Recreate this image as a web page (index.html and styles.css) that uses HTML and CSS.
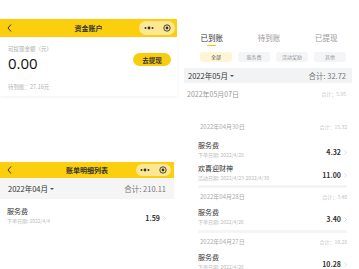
FILE: index.html
```html
<!DOCTYPE html>
<html lang="zh-CN">
<head>
  <meta charset="UTF-8">
  <meta name="viewport" content="width=device-width, initial-scale=1.0">
  <title>资金账户</title>
  <link rel="stylesheet" href="styles.css">
</head>
<body>
  <div class="page">
    <!-- 左侧：资金账户 + 账单明细 -->
    <div class="col-left">
      <section class="account">
        <header class="navbar">
          <span class="nav-back"><svg width="5" height="8" viewBox="0 0 5 8"><polyline points="4,0.5 1,4 4,7.5" fill="none" stroke="#333" stroke-width="1"/></svg></span>
          <div class="nav-title">资金账户</div>
          <span class="capsule">
            <svg width="10" height="4" viewBox="0 0 10 4"><circle cx="1.5" cy="2" r="1" fill="#333"/><circle cx="5" cy="2" r="1.4" fill="#333"/><circle cx="8.5" cy="2" r="1" fill="#333"/></svg>
            <svg width="8" height="8" viewBox="0 0 8 8"><circle cx="4" cy="4" r="3.2" fill="none" stroke="#333" stroke-width="0.9"/><circle cx="4" cy="4" r="1.4" fill="#333"/></svg>
          </span>
        </header>
        <div class="balance-card">
          <p class="balance-label">可提现金额（元）</p>
          <div class="balance-row">
            <span class="balance-amount">0.00</span>
            <button class="withdraw-btn">去提现</button>
          </div>
          <p class="balance-pending">待到账：27.16元</p>
        </div>
      </section>

      <section class="bills">
        <header class="navbar navbar--small">
          <span class="nav-back"><svg width="5" height="8" viewBox="0 0 5 8"><polyline points="4,0.5 1,4 4,7.5" fill="none" stroke="#333" stroke-width="1"/></svg></span>
          <div class="nav-title">账单明细列表</div>
          <span class="capsule">
            <svg width="10" height="4" viewBox="0 0 10 4"><circle cx="1.5" cy="2" r="1" fill="#333"/><circle cx="5" cy="2" r="1.4" fill="#333"/><circle cx="8.5" cy="2" r="1" fill="#333"/></svg>
            <svg width="8" height="8" viewBox="0 0 8 8"><circle cx="4" cy="4" r="3.2" fill="none" stroke="#333" stroke-width="0.9"/><circle cx="4" cy="4" r="1.4" fill="#333"/></svg>
          </span>
        </header>
        <div class="month-bar">
          <span class="month-pick">2022年04月 <i class="caret"></i></span>
          <span class="month-total">合计: 210.11</span>
        </div>
        <div class="bill-row bill-row--plain">
          <div class="bill-info">
            <div class="bill-name">服务费</div>
            <div class="bill-sub">下单日期: 2022/4/4</div>
          </div>
          <div class="bill-amount">1.59 <svg class="chev" width="3" height="5" viewBox="0 0 3 5"><polyline points="0.5,0.5 2.5,2.5 0.5,4.5" fill="none" stroke="#c8c8c8" stroke-width="0.7"/></svg></div>
        </div>
      </section>
    </div>

    <!-- 右侧：到账明细 -->
    <div class="col-right">
      <nav class="tabs">
        <span class="tab tab--active">已到账</span>
        <span class="tab">待到账</span>
        <span class="tab">已提现</span>
      </nav>
      <div class="chips">
        <span class="chip chip--active">全部</span>
        <span class="chip">服务费</span>
        <span class="chip">活动奖励</span>
        <span class="chip">其他</span>
      </div>
      <div class="month-bar month-bar--wide">
        <span class="month-pick">2022年05月 <i class="caret"></i></span>
        <span class="month-total">合计: 32.72</span>
      </div>
      <div class="day-head day-head--top">
        <span>2022年05月07日</span>
        <span class="day-total">合计：5.95</span>
      </div>

      <div class="day-list">
        <div class="day-group day-group--first">
          <div class="day-head">
            <span>2022年04月30日</span>
            <span class="day-total">合计：15.32</span>
          </div>
          <div class="bill-row">
            <div class="bill-info">
              <div class="bill-name">服务费</div>
              <div class="bill-sub">下单日期: 2022/4/28</div>
            </div>
            <div class="bill-amount">4.32 <svg class="chev" width="3" height="5" viewBox="0 0 3 5"><polyline points="0.5,0.5 2.5,2.5 0.5,4.5" fill="none" stroke="#c8c8c8" stroke-width="0.7"/></svg></div>
          </div>
          <div class="bill-row">
            <div class="bill-info">
              <div class="bill-name">欢喜迎财神</div>
              <div class="bill-sub">活动日期: 2022/4/23-2022/4/30</div>
            </div>
            <div class="bill-amount">11.00 <svg class="chev" width="3" height="5" viewBox="0 0 3 5"><polyline points="0.5,0.5 2.5,2.5 0.5,4.5" fill="none" stroke="#c8c8c8" stroke-width="0.7"/></svg></div>
          </div>
        </div>
        <div class="day-group">
          <div class="day-head">
            <span>2022年04月28日</span>
            <span class="day-total">合计：3.40</span>
          </div>
          <div class="bill-row">
            <div class="bill-info">
              <div class="bill-name">服务费</div>
              <div class="bill-sub">下单日期: 2022/4/26</div>
            </div>
            <div class="bill-amount">3.40 <svg class="chev" width="3" height="5" viewBox="0 0 3 5"><polyline points="0.5,0.5 2.5,2.5 0.5,4.5" fill="none" stroke="#c8c8c8" stroke-width="0.7"/></svg></div>
          </div>
        </div>
        <div class="day-group">
          <div class="day-head">
            <span>2022年04月27日</span>
            <span class="day-total">合计：10.28</span>
          </div>
          <div class="bill-row">
            <div class="bill-info">
              <div class="bill-name">服务费</div>
              <div class="bill-sub">下单日期: 2022/4/26</div>
            </div>
            <div class="bill-amount">10.28 <svg class="chev" width="3" height="5" viewBox="0 0 3 5"><polyline points="0.5,0.5 2.5,2.5 0.5,4.5" fill="none" stroke="#c8c8c8" stroke-width="0.7"/></svg></div>
          </div>
        </div>
      </div>
    </div>
  </div>
</body>
</html>
```

FILE: styles.css
```css
/* 页面基础 */
body {
  margin: 0;
  font-family: "Noto Sans CJK SC", "Noto Sans", sans-serif;
  background-color: #ffffff;
  color: #333333;
  overflow: hidden;
}

p {
  margin: 0;
}

.page {
  display: flex;
  gap: 6px;
  align-items: flex-start;
  height: 269px;
  overflow: hidden;
}

/* 左栏 */
.col-left {
  width: 177px;
  flex: none;
}

.account {
  padding-top: 19px;
}

/* 黄色导航栏 */
.navbar {
  display: grid;
  grid-template-columns: 38px 1fr 38px;
  align-items: center;
  height: 18px;
  background-color: #fbcf0e;
}

.navbar--small {
  height: 16px;
}

.nav-back {
  display: flex;
  padding-left: 7px;
}

.nav-title {
  text-align: center;
  font-size: 7px;
  font-weight: bold;
  line-height: 10px;
  color: #333333;
}

.capsule {
  display: flex;
  align-items: center;
  justify-content: space-around;
  width: 36px;
  height: 14px;
  border-radius: 7px;
  background-color: #fde794;
}

.navbar--small .capsule {
  height: 12px;
  width: 35px;
}

/* 余额卡片 */
.balance-card {
  padding: 8px 6px 5px 8px;
  background-color: #ffffff;
  box-shadow: 0 1px 3px rgba(0, 0, 0, 0.06);
}

.balance-label {
  font-size: 5.5px;
  line-height: 8px;
  color: #aaaaaa;
}

.balance-row {
  display: flex;
  justify-content: space-between;
  align-items: flex-start;
}

.balance-amount {
  font-family: "Open Sans", "Noto Sans", sans-serif;
  font-size: 15px;
  line-height: 20px;
  color: #111111;
}

.withdraw-btn {
  width: 38px;
  height: 13px;
  padding: 0;
  border: none;
  border-radius: 7px;
  background-color: #f9cd0f;
  font-family: inherit;
  font-size: 6.5px;
  font-weight: bold;
  color: #333333;
}

.balance-pending {
  margin-top: 10px;
  font-size: 5.5px;
  line-height: 8px;
  color: #b0b0b0;
}

/* 账单明细 */
.bills {
  width: 174px;
  margin-top: 66px;
}

.month-bar {
  display: flex;
  justify-content: space-between;
  align-items: center;
  height: 21px;
  padding: 0 8px;
  background-color: #f5f5f5;
  font-size: 7.5px;
}

.month-pick {
  display: flex;
  align-items: center;
  gap: 2px;
  color: #333333;
}

.caret {
  width: 0;
  height: 0;
  border-left: 2px solid transparent;
  border-right: 2px solid transparent;
  border-top: 2.5px solid #555555;
}

.month-total {
  color: #777777;
}

.bill-row {
  display: flex;
  justify-content: space-between;
  align-items: center;
  padding-top: 6px;
}

.bill-row--plain {
  padding: 8px 8px 8px 7px;
}

.bill-name {
  font-size: 7px;
  line-height: 9px;
  color: #333333;
}

.bill-sub {
  margin-top: 1px;
  font-size: 5px;
  line-height: 7px;
  color: #bbbbbb;
  white-space: nowrap;
}

.bill-amount {
  display: flex;
  align-items: center;
  gap: 3px;
  padding-top: 5px;
  font-size: 7px;
  font-weight: 600;
  color: #333333;
}

/* 右栏 */
.col-right {
  width: 176px;
  flex: none;
}

.tabs {
  display: grid;
  grid-template-columns: repeat(3, 1fr);
  width: 172px;
  padding-top: 32px;
}

.tab {
  position: relative;
  text-align: center;
  font-size: 7.5px;
  line-height: 11px;
  color: #999999;
  padding-bottom: 4px;
}

.tab--active {
  color: #333333;
}

.tab--active::after {
  content: "";
  position: absolute;
  left: 50%;
  bottom: 1px;
  width: 9px;
  height: 1.5px;
  margin-left: -5px;
  border-radius: 1px;
  background-color: #f7c600;
}

.chips {
  display: grid;
  grid-template-columns: repeat(4, 1fr);
  gap: 6px;
  margin: 5px 13px 0 17px;
}

.chip {
  height: 10px;
  border-radius: 3px;
  background-color: #f4f5f7;
  text-align: center;
  font-size: 5px;
  line-height: 10px;
  color: #999999;
}

.chip--active {
  background-color: #fdf5d6;
  color: #555555;
}

.month-bar--wide {
  height: 15px;
  margin: 6px 7px 0 1px;
  padding: 0 6px 0 4px;
  background-color: #f2f3f5;
}

.day-head {
  display: flex;
  justify-content: space-between;
  align-items: center;
  font-size: 6px;
  line-height: 10px;
  color: #aaaaaa;
  padding-top: 4px;
}

.day-head--top {
  margin: 2px 13px 0 4px;
  font-size: 7px;
  color: #999999;
}

.day-total {
  font-size: 5px;
  color: #c0c0c0;
}

.day-list {
  margin: 19px 12px 0 15px;
}

.day-group {
  border-top: 3px solid #f5f5f5;
  padding-bottom: 5px;
}

.day-group--first {
  border-top: none;
  padding-bottom: 4px;
}

.day-group--first .day-head {
  padding-bottom: 3px;
}

.day-group .day-head span:first-child {
  padding-left: 2px;
}
```
